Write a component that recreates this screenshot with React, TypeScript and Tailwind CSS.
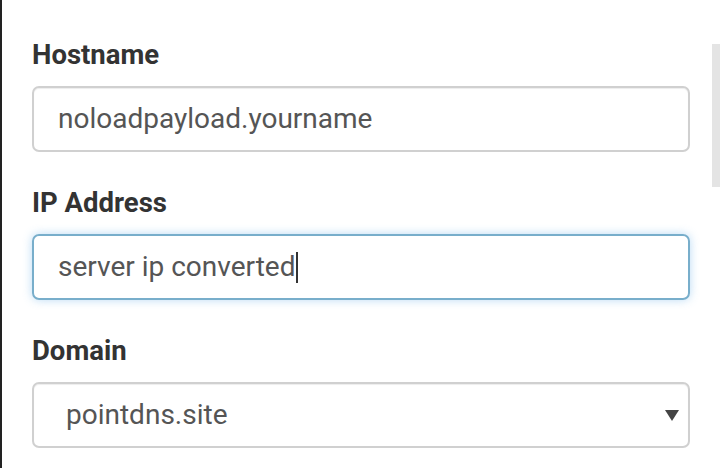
/**
 * Host record form (mobile view)
 */
const font = { fontFamily: 'Roboto, "Noto Sans", Arial, sans-serif' }

function Label({ children }: { children: string }) {
  return (
    <label className="block text-[27.5px] leading-[30px] font-bold text-[#333] mb-[16px]">
      {children}
    </label>
  )
}

export default function App() {
  return (
    <div
      className="relative h-[468px] w-[720px] overflow-hidden bg-white border-l-2 border-[#222]"
      style={font}
    >
      <div className="pl-[30px] pr-[30px] pt-[40px]">
        {/* Hostname */}
        <div className="mb-[36px]">
          <Label>Hostname</Label>
          <div className="h-[66px] rounded-[7px] border-2 border-[#d0d0d0] shadow-[inset_0_1px_1px_rgba(0,0,0,0.075)] flex items-center pl-[24px] text-[28px] text-[#555]">
            noloadpayload.yourname
          </div>
        </div>

        {/* IP Address (focused) */}
        <div className="mb-[36px]">
          <Label>IP Address</Label>
          <div className="h-[66px] rounded-[7px] border-2 border-[#78aecb] shadow-[0_0_10px_rgba(102,175,233,0.45)] flex items-center pl-[24px] text-[28px] text-[#555]">
            <span>server ip converted</span>
            <span className="ml-[1px] w-[2px] h-[31px] bg-[#333]" />
          </div>
        </div>

        {/* Domain */}
        <div>
          <Label>Domain</Label>
          <div className="h-[66px] rounded-[7px] border-2 border-[#d0d0d0] shadow-[inset_0_1px_1px_rgba(0,0,0,0.075)] flex items-center justify-between pl-[32px] pr-[9px] text-[28px] text-[#555]">
            <span>pointdns.site</span>
            <svg width="14" height="11" viewBox="0 0 14 11">
              <polygon points="0,0 14,0 7,11" fill="#444" />
            </svg>
          </div>
        </div>
      </div>

      {/* scrollbar */}
      <div className="absolute right-0 top-[44px] w-[8px] h-[143px] bg-[#e4e4e4]" />
    </div>
  )
}
